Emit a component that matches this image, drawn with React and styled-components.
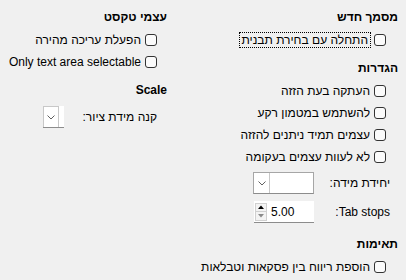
import React from 'react';
import styled, { createGlobalStyle } from 'styled-components';

const Global = createGlobalStyle`
    html, body {
        margin: 0;
        padding: 0;
        background: #f0f0f0;
    }
    body {
        font-family: "Liberation Sans", "DejaVu Sans", sans-serif;
        font-size: 12px;
        color: #000;
    }
`;

const Page = styled.div`
    direction: rtl;
    display: grid;
    grid-template-columns: 222px 167px;
    column-gap: 9px;
    align-items: start;
    padding: 8px 8px 0 0;
    width: 406px;
    height: 280px;
    box-sizing: border-box;
`;

const Column = styled.div`
    display: flex;
    flex-direction: column;
`;

const Section = styled.div`
    display: flex;
    flex-direction: column;
    margin-top: ${p => p.$top || 0}px;
`;

const Heading = styled.div`
    height: 18px;
    line-height: 18px;
    font-weight: bold;
    margin-bottom: 3px;
    white-space: nowrap;
`;

const CheckRow = styled.label`
    display: flex;
    align-items: center;
    gap: 4px;
    height: 22px;
    padding-right: ${p => p.$indent}px;
    white-space: nowrap;
`;

const Box = styled.span`
    flex: none;
    width: 10px;
    height: 10px;
    border: 1px solid #333;
    border-radius: 3px;
    background: #fbfbfb;
`;

const Focus = styled.span`
    outline: 1px dotted #000;
    outline-offset: 0;
    padding: 0 2px;
    line-height: 14px;
`;

const FieldRow = styled.div`
    display: flex;
    align-items: center;
    height: 22px;
    margin-top: ${p => p.$top || 0}px;
    padding-right: ${p => p.$indent}px;
    white-space: nowrap;
`;

const Label = styled.span`
    width: ${p => p.$w}px;
    flex: none;
`;

const Combo = styled.div`
    display: flex;
    direction: ltr;
    width: ${p => p.$w}px;
    height: 22px;
    box-sizing: border-box;
    background: #fff;
    border: ${p => (p.$open ? '1px solid #a6a6a6' : 'none')};
    border-bottom: 1px solid #8c8c8c;
`;

const DropButton = styled.div`
    width: 16px;
    height: 100%;
    box-sizing: border-box;
    display: flex;
    align-items: center;
    justify-content: center;
    background: #fff;
    border: 1px solid #c8c8c8;
    border-bottom: none;
    border-left: ${p => (p.$open ? 'none' : '1px solid #c8c8c8')};
    border-top: ${p => (p.$open ? 'none' : '1px solid #c8c8c8')};
`;

const Spin = styled.div`
    display: flex;
    direction: ltr;
    align-items: center;
    width: 60px;
    height: 22px;
    box-sizing: border-box;
    background: #fff;
    border-bottom: 1px solid #8c8c8c;
`;

const SpinButtons = styled.div`
    display: flex;
    flex-direction: column;
    width: 12px;
    height: 18px;
    margin-left: 1px;
`;

const SpinHalf = styled.div`
    flex: 1;
    display: flex;
    align-items: center;
    justify-content: center;
    background: #f3f3f3;
    border: 1px solid #d0d0d0;
    border-top: ${p => (p.$down ? 'none' : '1px solid #d0d0d0')};
`;

const SpinValue = styled.span`
    margin-left: 4px;
`;

const Chevron = () => (
    <svg width="8" height="5" viewBox="0 0 8 5">
        <polyline points="0.5,0.5 4,4 7.5,0.5" fill="none" stroke="#606060" strokeWidth="1" />
    </svg>
);

const Triangle = ({ down }) => (
    <svg width="6" height="4" viewBox="0 0 6 4">
        <polygon
            points={down ? '0,0 6,0 3,3.5' : '0,4 6,4 3,0.5'}
            fill={down ? '#8a8a8a' : '#000'}
        />
    </svg>
);

const Check = ({ indent, children }) => (
    <CheckRow $indent={indent}>
        <Box />
        {children}
    </CheckRow>
);

export default function App() {
    return (
        <>
            <Global />
            <Page>
                {/* right column */}
                <Column>
                    <Section>
                        <Heading>מסמך חדש</Heading>
                        <Check indent={12}>
                            <Focus>התחלה עם בחירת תבנית</Focus>
                        </Check>
                    </Section>

                    <Section $top={8}>
                        <Heading>הגדרות</Heading>
                        <Check indent={12}>העתקה בעת הזזה</Check>
                        <Check indent={12}>להשתמש במטמון רקע</Check>
                        <Check indent={12}>עצמים תמיד ניתנים להזזה</Check>
                        <Check indent={12}>לא לעוות עצמים בעקומה</Check>
                        <FieldRow $indent={8} $top={4}>
                            <Label $w={76}>יחידת מידה:</Label>
                            <Combo $w={61} $open>
                                <DropButton $open>
                                    <Chevron />
                                </DropButton>
                            </Combo>
                        </FieldRow>
                        <FieldRow $indent={8} $top={7}>
                            <Label $w={76}>Tab stops:</Label>
                            <Spin>
                                <SpinButtons>
                                    <SpinHalf>
                                        <Triangle />
                                    </SpinHalf>
                                    <SpinHalf $down>
                                        <Triangle down />
                                    </SpinHalf>
                                </SpinButtons>
                                <SpinValue>5.00</SpinValue>
                            </Spin>
                        </FieldRow>
                    </Section>

                    <Section $top={12}>
                        <Heading>תאימות</Heading>
                        <Check indent={12}>הוספת ריווח בין פסקאות וטבלאות</Check>
                    </Section>
                </Column>

                {/* left column */}
                <Column>
                    <Section>
                        <Heading>עצמי טקסט</Heading>
                        <Check indent={10}>הפעלת עריכה מהירה</Check>
                        <Check indent={10}>Only text area selectable</Check>
                    </Section>

                    <Section $top={8}>
                        <Heading>Scale</Heading>
                        <FieldRow $indent={10} $top={4}>
                            <Label $w={93}>קנה מידת ציור:</Label>
                            <Combo $w={21}>
                                <DropButton>
                                    <Chevron />
                                </DropButton>
                            </Combo>
                        </FieldRow>
                    </Section>
                </Column>
            </Page>
        </>
    );
}
